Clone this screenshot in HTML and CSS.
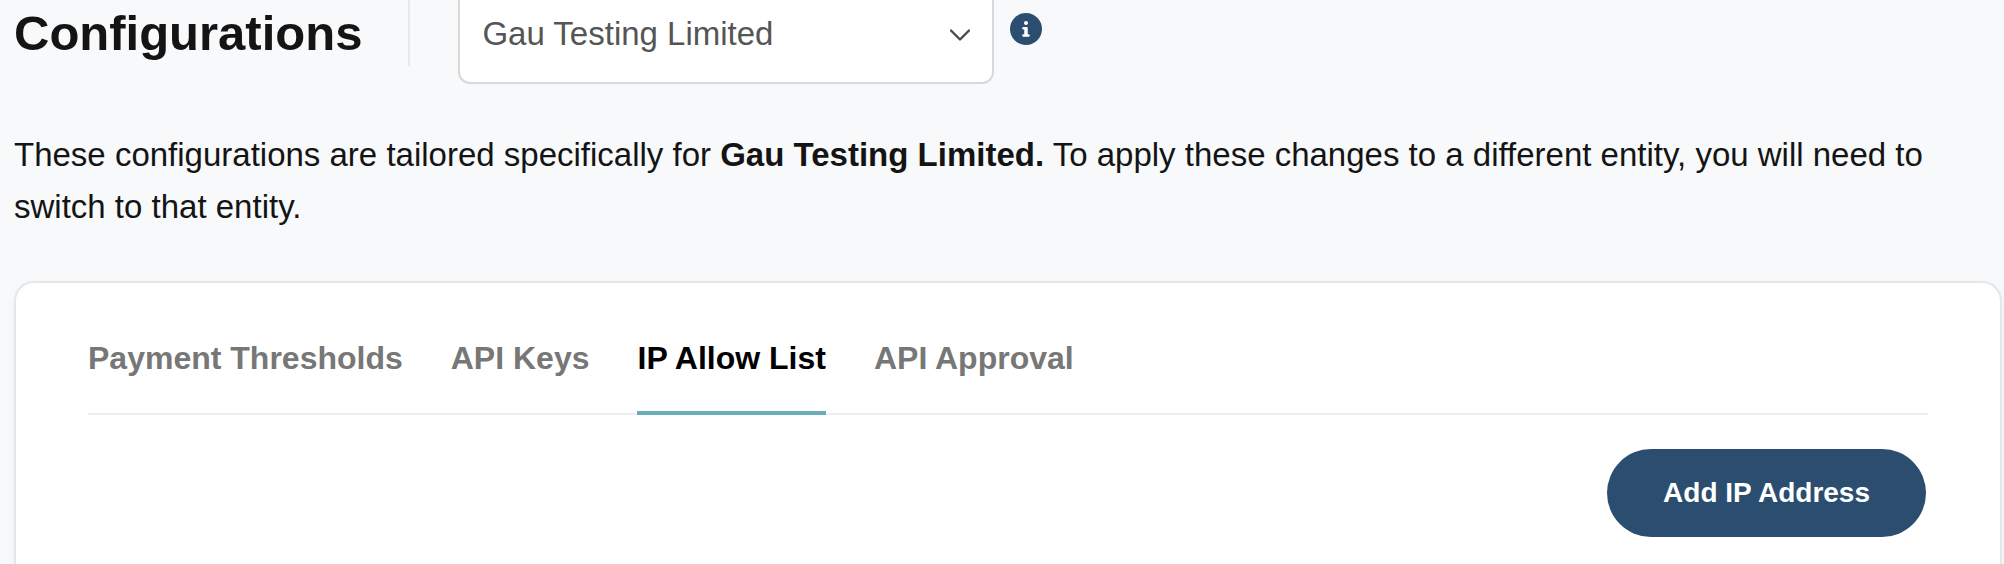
FILE: index.html
```html
<!DOCTYPE html>
<html lang="en">

<head>
    <meta charset="UTF-8">
    <meta name="viewport" content="width=device-width, initial-scale=1.0">
    <title>Configurations</title>
    <link rel="stylesheet" href="styles.css">
</head>

<body>
    <main class="page">
        <header class="page-header">
            <h1 class="title">Configurations</h1>
            <div class="divider"></div>
            <div class="entity">
                <select class="entity-select" aria-label="Entity">
                    <option>Gau Testing Limited</option>
                </select>
                <svg class="chevron" viewBox="0 0 20 12" aria-hidden="true">
                    <path d="M1 1.5 L10 10.5 L19 1.5" fill="none" stroke="#4a4a4a" stroke-width="2.4" stroke-linecap="round" stroke-linejoin="round" />
                </svg>
            </div>
            <button class="info-btn" aria-label="Entity information">
                <svg viewBox="0 0 32 32" aria-hidden="true">
                    <circle cx="16" cy="16" r="16" fill="#2a4d70" />
                    <circle cx="16" cy="10" r="2" fill="#fff" />
                    <path d="M12.8 14.6 H17.2 V21.8 H19.2 V23.2 H12.8 V21.8 H14.8 V16 H12.8 Z" fill="#fff" stroke="#fff" stroke-width="1" stroke-linejoin="round" />
                </svg>
            </button>
        </header>

        <p class="intro">These configurations are tailored specifically for <b>Gau Testing Limited.</b> To apply these changes to a different entity, you will need to switch to that entity.</p>

        <section class="card">
            <div class="tabs" role="tablist">
                <button class="tab" role="tab" aria-selected="false">Payment Thresholds</button>
                <button class="tab" role="tab" aria-selected="false">API Keys</button>
                <button class="tab active" role="tab" aria-selected="true">IP Allow List</button>
                <button class="tab" role="tab" aria-selected="false">API Approval</button>
            </div>
            <div class="actions">
                <button class="add-btn">Add IP Address</button>
            </div>
        </section>
    </main>
</body>

</html>
```
FILE: styles.css
```css
* {
    margin: 0;
    box-sizing: border-box;
    font-family: "Liberation Sans", Arial, sans-serif;
}

body {
    background-color: #f8f9fb;
    color: #141414;
}

button {
    padding: 0;
    border: none;
    background: none;
    cursor: pointer;
}

.page {
    min-height: 100vh;
    padding: 0 2px 0 14px;
    display: flex;
    flex-direction: column;
}

.page-header {
    display: flex;
    align-items: flex-start;
}

.title {
    font-size: 49px;
    line-height: 66px;
}

.divider {
    width: 2px;
    height: 66px;
    margin: 0 48px 0 46px;
    background-color: #e8e8ea;
}

.entity {
    position: relative;
    width: 536px;
}

.entity-select {
    display: block;
    width: 100%;
    height: 84px;
    padding: 0 64px 16px 22px;
    border: 2px solid #d9d9d9;
    border-top: none;
    border-radius: 0 0 12px 12px;
    background-color: #fff;
    color: #555;
    font-size: 33px;
    appearance: none;
}

.chevron {
    position: absolute;
    top: 29px;
    right: 24px;
    width: 20px;
    height: 12px;
    pointer-events: none;
}

.info-btn {
    width: 32px;
    height: 32px;
    margin: 13px 0 0 16px;
}

.info-btn svg {
    display: block;
}

.intro {
    margin: 45px 0 48px;
    padding-right: 40px;
    font-size: 33px;
    line-height: 52px;
}

.card {
    flex: 1;
    padding: 36px 72px 24px;
    border: 2px solid #e5e6e8;
    border-bottom: none;
    border-radius: 20px 20px 0 0;
    background-color: #fff;
    box-shadow: 0 4px 12px rgba(0, 0, 0, 0.04);
}

.tabs {
    display: flex;
    gap: 48px;
    border-bottom: 2px solid #efefef;
}

.tab {
    height: 96px;
    margin-bottom: -2px;
    padding-bottom: 14px;
    border-bottom: 4px solid transparent;
    color: #777;
    font-size: 32px;
    font-weight: bold;
}

.tab.active {
    color: #000;
    border-bottom-color: #68adb8;
}

.actions {
    display: flex;
    justify-content: flex-end;
    padding: 34px 2px 0 0;
}

.add-btn {
    height: 88px;
    padding: 0 56px;
    border-radius: 44px;
    background-color: #2a4d70;
    color: #fff;
    font-size: 28px;
    font-weight: bold;
}
```
